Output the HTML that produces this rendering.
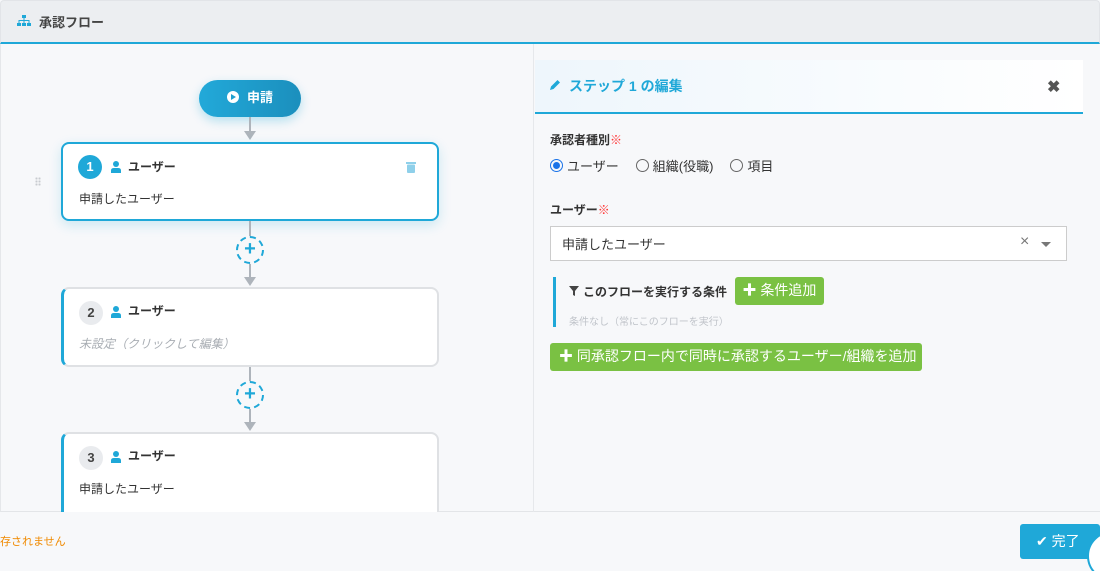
<!DOCTYPE html>
<html><head><meta charset="utf-8"><style>
*{box-sizing:border-box;margin:0;padding:0}
html{width:1100px;height:571px;overflow:hidden}
body{width:1100px;height:571px;overflow:hidden;background:#f7f8fa;font-family:"Liberation Sans","Noto Sans CJK JP",sans-serif;color:#333;position:relative}
.abs{position:absolute}
.hdr{left:0;top:0;width:1100px;height:44px;background:#eceef1;border-radius:4px 4px 0 0;border:1px solid #e2e4e8;border-bottom:2px solid #1fa8d8}
.body{left:0;top:44px;width:1100px;height:468px;background:#f7f8fa;border-left:1px solid #e5e7ea;border-bottom:1px solid #e3e5e8}
.div{left:533px;top:44px;width:1px;height:468px;background:#e6e8eb}
.card{background:#fff;border:2px solid #dfe1e4;border-left:3px solid #1fa8d8;border-radius:8px;width:378px;left:61px}
.num{position:absolute;left:15px;top:12px;width:24px;height:24px;border-radius:50%;background:#e9ebee;color:#444;font-size:13px;font-weight:bold;text-align:center;line-height:24px}
.ttl{position:absolute;left:47px;top:13px;font-size:12px;font-weight:bold;color:#333}
.sub{position:absolute;left:15px;top:46px;font-size:12px;color:#333}
.line{width:2px;background:#aeb4bb;left:249px}
.arr{left:244px;width:0;height:0;border-left:6px solid transparent;border-right:6px solid transparent;border-top:9px solid #aeb4bb}
.plus{left:236px;width:28px;height:28px;border:2px dashed #1fa8d8;border-radius:50%;background:#f7f8fa;color:#1fa8d8;font-size:20px;font-weight:bold;text-align:center;line-height:23px}
.green{background:#7ac143;color:#fff;border-radius:3px;font-size:14px}
</style></head><body>
<div class="abs hdr"></div>
<svg class="abs" style="left:17px;top:15px" width="14" height="12" viewBox="0 0 14 12"><rect x="5" y="0" width="4" height="3" fill="#1fa8d8"/><rect x="0" y="8" width="4" height="3" fill="#1fa8d8"/><rect x="5" y="8" width="4" height="3" fill="#1fa8d8"/><rect x="10" y="8" width="4" height="3" fill="#1fa8d8"/><path d="M2 8V5.5h10V8M7 3v5" stroke="#1fa8d8" fill="none"/></svg>
<div class="abs" style="left:39px;top:12px;font-size:13px;font-weight:bold;color:#444">承認フロー</div>
<div class="abs body"></div>
<div class="abs div"></div>

<div class="abs" style="left:199px;top:80px;width:102px;height:37px;border-radius:19px;background:linear-gradient(90deg,#22a9d9,#1b8fbd);box-shadow:0 4px 10px rgba(31,168,216,.3);color:#fff;font-size:13px;font-weight:bold;line-height:36px;text-align:center"><span style="display:inline-block;width:12px;height:12px;background:#fff;border-radius:50%;vertical-align:-1px;margin-right:8px;position:relative"><span style="position:absolute;left:4px;top:3px;border-left:5px solid #1fa0cf;border-top:3px solid transparent;border-bottom:3px solid transparent"></span></span>申請</div>
<div class="abs line" style="top:117px;height:16px"></div><div class="abs arr" style="top:131px"></div>

<div class="abs" style="left:35px;top:177px;width:6px;height:9px;background:radial-gradient(circle,#c8cbd0 1px,transparent 1.2px) 0 0/3px 3px"></div>
<div class="abs card" style="top:142px;height:79px;border:2px solid #1fa8d8;box-shadow:0 4px 12px rgba(31,168,216,.2)">
 <div class="num" style="background:#1fa8d8;color:#fff;left:15px;top:11px">1</div>
 <svg class="abs" style="left:48px;top:17px" width="10" height="12" viewBox="0 0 10 12"><circle cx="5" cy="3" r="3" fill="#1fa8d8"/><path d="M0 12V9.5Q0 7 3 7h4q3 0 3 2.5V12z" fill="#1fa8d8"/></svg>
 <div class="ttl" style="left:65px;top:14px">ユーザー</div>
 <svg class="abs" style="left:343px;top:17px" width="10" height="12" viewBox="0 0 10 12"><rect x="0" y="1" width="10" height="2" fill="#8fd0ea"/><rect x="1" y="3.5" width="8" height="8.5" rx="1" fill="#8fd0ea"/></svg>
 <div class="sub" style="left:16px;top:46px">申請したユーザー</div>
</div>
<div class="abs line" style="top:221px;height:16px"></div>
<div class="abs plus" style="top:236px">+</div>
<div class="abs line" style="top:264px;height:14px"></div><div class="abs arr" style="top:277px"></div>

<div class="abs card" style="top:287px;height:80px">
 <div class="num">2</div>
 <svg class="abs" style="left:47px;top:17px" width="10" height="12" viewBox="0 0 10 12"><circle cx="5" cy="3" r="3" fill="#1fa8d8"/><path d="M0 12V9.5Q0 7 3 7h4q3 0 3 2.5V12z" fill="#1fa8d8"/></svg>
 <div class="ttl" style="left:64px">ユーザー</div>
 <div class="sub" style="color:#a8adb3;font-style:italic">未設定（クリックして編集）</div>
</div>
<div class="abs line" style="top:367px;height:15px"></div>
<div class="abs plus" style="top:381px">+</div>
<div class="abs line" style="top:409px;height:14px"></div><div class="abs arr" style="top:422px"></div>

<div class="abs card" style="top:432px;height:80px;border-bottom:none;border-radius:8px 8px 0 0">
 <div class="num">3</div>
 <svg class="abs" style="left:47px;top:17px" width="10" height="12" viewBox="0 0 10 12"><circle cx="5" cy="3" r="3" fill="#1fa8d8"/><path d="M0 12V9.5Q0 7 3 7h4q3 0 3 2.5V12z" fill="#1fa8d8"/></svg>
 <div class="ttl" style="left:64px">ユーザー</div>
 <div class="sub">申請したユーザー</div>
</div>

<!-- right panel -->
<div class="abs" style="left:535px;top:60px;width:548px;height:54px;background:linear-gradient(90deg,#eef6fc,#fff);border-bottom:2px solid #1fa8d8"></div>
<svg class="abs" style="left:549px;top:79px" width="12" height="12" viewBox="0 0 12 12"><path d="M1 11l1-3.5L8.5 1l2.5 2.5L4.5 10z" fill="#1fa8d8"/></svg>
<div class="abs" style="left:569px;top:76px;font-size:14px;font-weight:bold;color:#1fa8d8">ステップ 1 の編集</div>
<div class="abs" style="left:1047px;top:77px;font-size:16px;font-weight:bold;color:#555">✖</div>

<div class="abs" style="left:550px;top:131px;font-size:12px;font-weight:bold;color:#333">承認者種別<span style="color:#f33">※</span></div>
<div class="abs" style="left:550px;top:156px;font-size:13px;color:#333;display:flex;align-items:center">
 <span style="width:13px;height:13px;border-radius:50%;border:1px solid #1a73e8;display:inline-block;position:relative;margin-right:4px"><span style="position:absolute;left:2px;top:2px;width:7px;height:7px;border-radius:50%;background:#1a73e8"></span></span>ユーザー
 <span style="width:13px;height:13px;border-radius:50%;border:1px solid #666;display:inline-block;margin:0 4px 0 17px"></span>組織(役職)
 <span style="width:13px;height:13px;border-radius:50%;border:1px solid #666;display:inline-block;margin:0 4px 0 17px"></span>項目
</div>
<div class="abs" style="left:550px;top:201px;font-size:12px;font-weight:bold;color:#333">ユーザー<span style="color:#f33">※</span></div>
<div class="abs" style="left:550px;top:226px;width:517px;height:35px;background:#fff;border:1px solid #ccc"></div>
<div class="abs" style="left:562px;top:234px;font-size:13px;color:#333">申請したユーザー</div>
<div class="abs" style="left:1020px;top:233px;font-size:16px;color:#777">×</div>
<div class="abs" style="left:1041px;top:242px;border-left:5px solid transparent;border-right:5px solid transparent;border-top:5px solid #777"></div>

<div class="abs" style="left:553px;top:277px;width:3px;height:50px;background:#1fa8d8"></div>
<svg class="abs" style="left:569px;top:286px" width="10" height="10" viewBox="0 0 10 10"><path d="M0 0h10L6 5v5L4 9V5z" fill="#444"/></svg>
<div class="abs" style="left:583px;top:283px;font-size:12px;font-weight:bold;color:#333">このフローを実行する条件</div>
<div class="abs green" style="left:735px;top:277px;width:89px;height:28px;line-height:27px;text-align:center"><b>✚</b> 条件追加</div>
<div class="abs" style="left:569px;top:313px;font-size:10px;color:#c0c4ca">条件なし（常にこのフローを実行）</div>
<div class="abs green" style="left:550px;top:343px;width:372px;height:28px;line-height:27px;padding-left:9px"><b>✚</b> 同承認フロー内で同時に承認するユーザー/組織を追加</div>

<div class="abs" style="left:0;top:533px;font-size:11px;color:#f08a00">存されません</div>
<div class="abs" style="left:1020px;top:524px;width:80px;height:35px;background:#1fa8d8;border-radius:3px;color:#fff;font-size:14px;line-height:34px;padding-left:16px">✔ 完了</div>
<div class="abs" style="left:1087px;top:531px;width:50px;height:50px;border-radius:50%;background:#fff;border:2px solid #1fa8d8"></div>
</body></html>
